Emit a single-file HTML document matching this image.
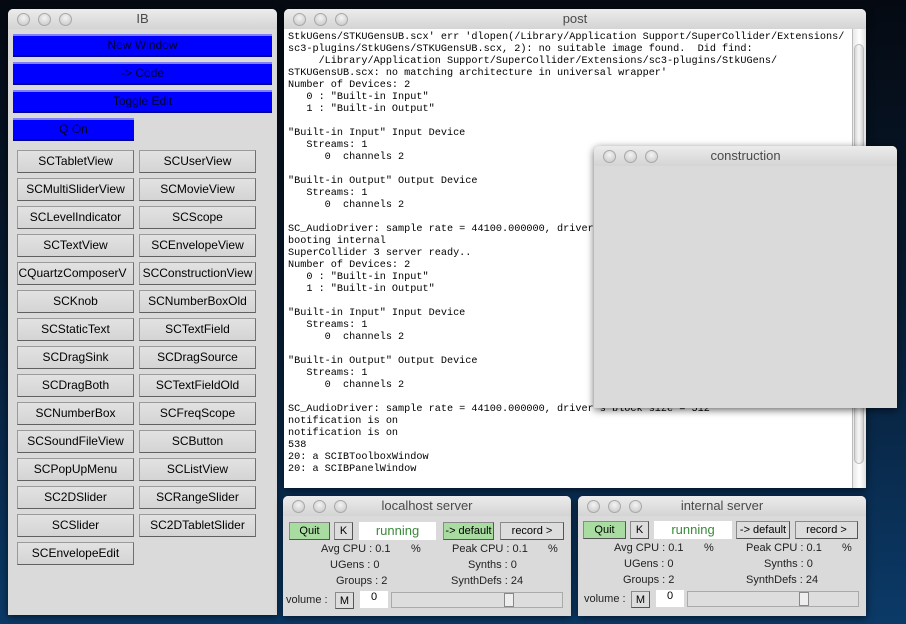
<!DOCTYPE html>
<html><head><meta charset="utf-8"><style>
*{margin:0;padding:0;box-sizing:border-box}
body{width:906px;height:624px;overflow:hidden;position:relative;background:linear-gradient(#050a12 0%,#071a30 45%,#0b3a68 100%);font-family:"Liberation Sans",sans-serif}
.a{position:absolute}
.win{position:absolute;background:#dadada;border-radius:5px 5px 0 0;box-shadow:0 2px 8px rgba(0,0,0,.6)}
.tb{position:absolute;left:0;top:0;right:0;height:20px;background:linear-gradient(#ececec,#d4d4d4);border-radius:5px 5px 0 0;text-align:center;font-size:13px;color:#4a4a4a;line-height:20px}
.dot{position:absolute;top:4px;width:13px;height:13px;border-radius:50%;background:radial-gradient(circle at 50% 35%,#f4f4f4,#c4c4c4);border:1px solid #a8a8a8}
.blue{position:absolute;background:#0000ff;border-top:2px solid #8080ff;border-bottom:2px solid #00009a;font-size:12px;color:#000033;text-align:center;line-height:19px}
.gb{position:absolute;width:117px;height:23px;background:linear-gradient(#e2e2e2,#d4d4d4);border:1px solid #9a9a9a;border-right-color:#707070;border-bottom-color:#606060;font-size:12px;text-align:center;line-height:21px;color:#000;white-space:nowrap;overflow:hidden}
pre{position:absolute;font-family:"Liberation Mono",monospace;font-size:10.2px;line-height:12px;color:#000}
.sb{position:absolute;font-size:11px;height:18px;line-height:17px;text-align:center;border:1px solid #8a8a8a;border-right-color:#555;border-bottom-color:#555}
.t{position:absolute;font-size:11px;color:#222;white-space:nowrap}
</style></head><body>

<!-- IB window -->
<div class="win" style="left:8px;top:9px;width:269px;height:606px">
<div class="tb">IB</div>
<div class="dot" style="left:9px"></div><div class="dot" style="left:30px"></div><div class="dot" style="left:51px"></div>
<div class="blue" style="left:5px;top:25px;width:259px;height:23px">New Window</div>
<div class="blue" style="left:5px;top:53px;width:259px;height:23px">-&gt; Code</div>
<div class="blue" style="left:5px;top:81px;width:259px;height:23px">Toggle Edit</div>
<div class="blue" style="left:5px;top:109px;width:121px;height:23px">Q On</div>
<div class="gb" style="left:9px;top:141px">SCTabletView</div><div class="gb" style="left:131px;top:141px">SCUserView</div>
<div class="gb" style="left:9px;top:169px">SCMultiSliderView</div><div class="gb" style="left:131px;top:169px">SCMovieView</div>
<div class="gb" style="left:9px;top:197px">SCLevelIndicator</div><div class="gb" style="left:131px;top:197px">SCScope</div>
<div class="gb" style="left:9px;top:225px">SCTextView</div><div class="gb" style="left:131px;top:225px">SCEnvelopeView</div>
<div class="gb" style="left:9px;top:253px;text-indent:-14px">SCQuartzComposerV</div><div class="gb" style="left:131px;top:253px">SCConstructionView</div>
<div class="gb" style="left:9px;top:281px">SCKnob</div><div class="gb" style="left:131px;top:281px">SCNumberBoxOld</div>
<div class="gb" style="left:9px;top:309px">SCStaticText</div><div class="gb" style="left:131px;top:309px">SCTextField</div>
<div class="gb" style="left:9px;top:337px">SCDragSink</div><div class="gb" style="left:131px;top:337px">SCDragSource</div>
<div class="gb" style="left:9px;top:365px">SCDragBoth</div><div class="gb" style="left:131px;top:365px">SCTextFieldOld</div>
<div class="gb" style="left:9px;top:393px">SCNumberBox</div><div class="gb" style="left:131px;top:393px">SCFreqScope</div>
<div class="gb" style="left:9px;top:421px">SCSoundFileView</div><div class="gb" style="left:131px;top:421px">SCButton</div>
<div class="gb" style="left:9px;top:449px">SCPopUpMenu</div><div class="gb" style="left:131px;top:449px">SCListView</div>
<div class="gb" style="left:9px;top:477px">SC2DSlider</div><div class="gb" style="left:131px;top:477px">SCRangeSlider</div>
<div class="gb" style="left:9px;top:505px">SCSlider</div><div class="gb" style="left:131px;top:505px">SC2DTabletSlider</div>
<div class="gb" style="left:9px;top:533px">SCEnvelopeEdit</div>
</div>

<!-- post window -->
<div class="win" style="left:284px;top:9px;width:582px;height:479px;background:#fff">
<div class="tb">post</div>
<div class="dot" style="left:9px"></div><div class="dot" style="left:30px"></div><div class="dot" style="left:51px"></div>
<pre style="left:4px;top:23px">StkUGens/STKUGensUB.scx' err 'dlopen(/Library/Application Support/SuperCollider/Extensions/
sc3-plugins/StkUGens/STKUGensUB.scx, 2): no suitable image found.  Did find:
     /Library/Application Support/SuperCollider/Extensions/sc3-plugins/StkUGens/
STKUGensUB.scx: no matching architecture in universal wrapper'
Number of Devices: 2
   0 : "Built-in Input"
   1 : "Built-in Output"

"Built-in Input" Input Device
   Streams: 1
      0  channels 2

"Built-in Output" Output Device
   Streams: 1
      0  channels 2

SC_AudioDriver: sample rate = 44100.000000, driver's block size = 512
booting internal
SuperCollider 3 server ready..
Number of Devices: 2
   0 : "Built-in Input"
   1 : "Built-in Output"

"Built-in Input" Input Device
   Streams: 1
      0  channels 2

"Built-in Output" Output Device
   Streams: 1
      0  channels 2

SC_AudioDriver: sample rate = 44100.000000, driver's block size = 512
notification is on
notification is on
538
20: a SCIBToolboxWindow
20: a SCIBPanelWindow</pre>
<div class="a" style="left:568px;top:20px;width:14px;height:459px;background:linear-gradient(90deg,#e8e8e8,#fff,#e0e0e0);border-left:1px solid #bbb"></div>
<div class="a" style="left:570px;top:35px;width:10px;height:420px;border-radius:5px;background:linear-gradient(90deg,#d8d8d8,#f8f8f8,#d0d0d0);border:1px solid #bbb"></div>
</div>

<!-- construction -->
<div class="win" style="left:594px;top:146px;width:303px;height:262px">
<div class="tb">construction</div>
<div class="dot" style="left:9px"></div><div class="dot" style="left:30px"></div><div class="dot" style="left:51px"></div>
</div>

<!-- localhost server -->
<div class="win" style="left:283px;top:496px;width:288px;height:120px">
<div class="tb">localhost server</div>
<div class="dot" style="left:9px"></div><div class="dot" style="left:30px"></div><div class="dot" style="left:51px"></div>
<div class="sb" style="left:6px;top:26px;width:41px;background:#a8dca0">Quit</div>
<div class="sb" style="left:51px;top:26px;width:19px;background:#ddd">K</div>
<div class="a" style="left:76px;top:26px;width:77px;height:18px;background:#fff;color:#3a8a3a;font-size:13px;text-align:center;line-height:18px">running</div>
<div class="sb" style="left:160px;top:26px;width:51px;background:#a8dca0">-&gt; default</div>
<div class="sb" style="left:217px;top:26px;width:64px;background:#ddd">record &gt;</div>
<div class="t" style="left:38px;top:47px">Avg CPU : 0.1</div><div class="t" style="left:128px;top:47px">%</div>
<div class="t" style="left:169px;top:47px">Peak CPU : 0.1</div><div class="t" style="left:265px;top:47px">%</div>
<div class="t" style="left:47px;top:63px">UGens : 0</div><div class="t" style="left:185px;top:63px">Synths : 0</div>
<div class="t" style="left:53px;top:79px">Groups : 2</div><div class="t" style="left:168px;top:79px">SynthDefs : 24</div>
<div class="t" style="left:3px;top:98px">volume :</div>
<div class="sb" style="left:52px;top:96px;width:19px;height:17px;background:#ddd">M</div>
<div class="a" style="left:77px;top:95px;width:28px;height:17px;background:#fff;font-size:11px;text-align:center">0</div>
<div class="a" style="left:108px;top:96px;width:172px;height:16px;background:#ddd;border:1px solid #aaa"></div>
<div class="a" style="left:221px;top:97px;width:10px;height:14px;background:#eee;border:1px solid #888"></div>
</div>

<!-- internal server -->
<div class="win" style="left:578px;top:496px;width:288px;height:120px">
<div class="tb">internal server</div>
<div class="dot" style="left:9px"></div><div class="dot" style="left:30px"></div><div class="dot" style="left:51px"></div>
<div class="sb" style="left:5px;top:25px;width:43px;background:#a8dca0">Quit</div>
<div class="sb" style="left:52px;top:25px;width:19px;background:#ddd">K</div>
<div class="a" style="left:76px;top:25px;width:78px;height:18px;background:#fff;color:#3a8a3a;font-size:13px;text-align:center;line-height:18px">running</div>
<div class="sb" style="left:158px;top:25px;width:54px;background:#ddd">-&gt; default</div>
<div class="sb" style="left:217px;top:25px;width:63px;background:#ddd">record &gt;</div>
<div class="t" style="left:36px;top:46px">Avg CPU : 0.1</div><div class="t" style="left:126px;top:46px">%</div>
<div class="t" style="left:168px;top:46px">Peak CPU : 0.1</div><div class="t" style="left:264px;top:46px">%</div>
<div class="t" style="left:46px;top:62px">UGens : 0</div><div class="t" style="left:186px;top:62px">Synths : 0</div>
<div class="t" style="left:45px;top:78px">Groups : 2</div><div class="t" style="left:168px;top:78px">SynthDefs : 24</div>
<div class="t" style="left:6px;top:97px">volume :</div>
<div class="sb" style="left:53px;top:95px;width:19px;height:17px;background:#ddd">M</div>
<div class="a" style="left:78px;top:94px;width:28px;height:17px;background:#fff;font-size:11px;text-align:center">0</div>
<div class="a" style="left:109px;top:95px;width:172px;height:16px;background:#ddd;border:1px solid #aaa"></div>
<div class="a" style="left:221px;top:96px;width:10px;height:14px;background:#eee;border:1px solid #888"></div>
</div>
</body></html>
